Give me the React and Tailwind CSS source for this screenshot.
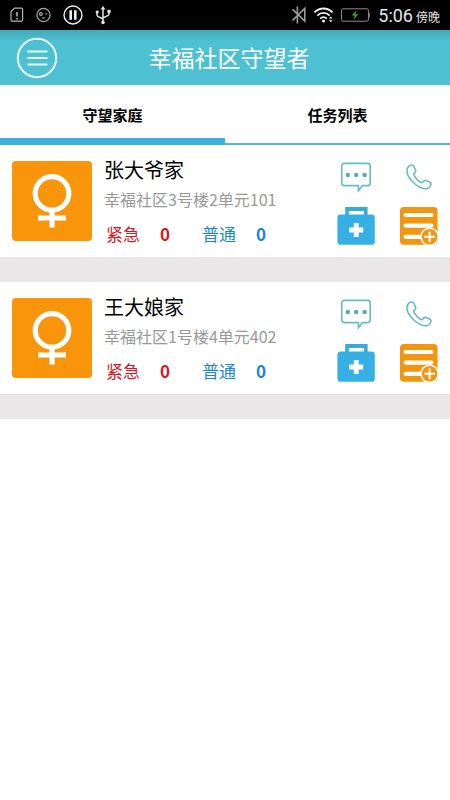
const families = [
    {
        name: "张大爷家",
        address: "幸福社区3号楼2单元101",
        urgent: 0,
        normal: 0,
    },
    {
        name: "王大娘家",
        address: "幸福社区1号楼4单元402",
        urgent: 0,
        normal: 0,
    },
]

const tabs = ["守望家庭", "任务列表"]

const SimIcon = () => (
    <svg width="14" height="16" viewBox="0 0 14 16" fill="none" stroke="#b4b4b4" strokeWidth="1.2">
        <path d="M4.6 1.2H11.4a1.2 1.2 0 0 1 1.2 1.2V13a1.2 1.2 0 0 1-1.2 1.2H2.2A1.2 1.2 0 0 1 1 13V4.8Z" />
        <path d="M7 5v4.6M7 11v1.4" strokeWidth="1.6" />
    </svg>
)

const FaceIcon = () => (
    <svg width="15" height="16" viewBox="0.5 0 15 16" fill="none" stroke="#a8a8a8" strokeWidth="1.2">
        <circle cx="8" cy="8" r="6.6" />
        <circle cx="5.4" cy="7" r="1.4" />
        <path d="M9.8 7h2M6.5 11h3" />
    </svg>
)

const PauseIcon = () => (
    <svg width="20" height="20" viewBox="0 0 20 20" fill="none" stroke="#f0f0f0">
        <circle cx="10" cy="10" r="9" strokeWidth="1.4" />
        <path d="M7.7 5.2v9.6M12.3 5.2v9.6" strokeWidth="2.6" />
    </svg>
)

const UsbIcon = () => (
    <svg width="16" height="20" viewBox="0 0 16 20" fill="none" stroke="#e4e4e4" strokeWidth="1.5">
        <path d="M8 3v14M2 7.5v2.2c0 1 .5 1.6 1.4 2L8 14M14 6.5v2.2c0 1-.5 1.6-1.4 2L8 13" />
        <path d="M8 0.8 10.3 4.4H5.7Z" fill="#e4e4e4" stroke="none" />
        <circle cx="8" cy="17.4" r="1.8" fill="#e4e4e4" stroke="none" />
        <circle cx="2.2" cy="7" r="1.6" fill="#e4e4e4" stroke="none" />
        <path d="M12.4 4.8h3.2V8h-3.2Z" fill="#e4e4e4" stroke="none" />
    </svg>
)

const BluetoothIcon = () => (
    <svg width="14" height="18" viewBox="0 0 14 18" fill="none" stroke="#9c9c9c" strokeWidth="1.6">
        <path d="M0.6 3.4 12.8 15.2V2.4L0.6 14.4M5.4 0.4v17.2" />
    </svg>
)

const WifiIcon = () => (
    <svg width="19" height="16" viewBox="0.5 0 19 16" fill="none" stroke="#f0f0f0" strokeWidth="1.8">
        <path d="M1 5.4C6 .2 14 .2 19 5.4M3.8 8.6c3.6-3.6 8.8-3.6 12.4 0M6.6 11.6c2-1.8 4.8-1.8 6.8 0" />
        <circle cx="10" cy="14" r="1.5" fill="#f0f0f0" stroke="none" />
        <path d="M17.2 9.6 19 11.6h-3.6ZM17.2 15.2 15.4 13.2H19Z" fill="#f0f0f0" stroke="none" />
    </svg>
)

const BatteryIcon = () => (
    <svg width="29" height="14" viewBox="0.5 0 29 14" fill="none">
        <rect x="1" y="0.8" width="27" height="12.4" rx="1.6" stroke="#8a8a8a" />
        <path d="M28.6 5v4" stroke="#8a8a8a" strokeWidth="1.4" />
        <path d="M15.6 2.4 11.4 7.6h2.8l-1 4 4.6-5.4h-3Z" fill="#3fae2a" />
    </svg>
)

const FemaleIcon = () => (
    <svg width="40" height="56" viewBox="0 0 40 56" fill="none" stroke="#fff">
        <circle cx="20" cy="20.4" r="16.8" strokeWidth="5.2" />
        <path d="M20 37v17.5M6 45h28" strokeWidth="5.2" />
    </svg>
)

const ChatIcon = () => (
    <svg width="32" height="32" viewBox="0 0 32 32" fill="none" stroke="#66bdc0" strokeWidth="1.6">
        <path d="M4.4 2.4H27.6a2.6 2.6 0 0 1 2.6 2.6V22a2.6 2.6 0 0 1-2.6 2.6H22.4L18.4 29.6V24.6H4.4A2.6 2.6 0 0 1 1.8 22V5A2.6 2.6 0 0 1 4.4 2.4Z" />
        <g fill="#55adb2" stroke="none">
            <circle cx="7.8" cy="14" r="2.2" />
            <circle cx="16.2" cy="14" r="2.2" />
            <circle cx="24.6" cy="14" r="2.2" />
        </g>
    </svg>
)

const PhoneIcon = () => (
    <svg width="28" height="28" viewBox="0 0 28 28" fill="none" stroke="#66bdc0" strokeWidth="1.6" strokeLinejoin="round">
        <path d="M7.2 2C5 1.6 2.4 4 2 6.6C1.6 9.6 3.4 14.4 7.6 18.8C11.6 23 16.4 25.6 20.4 25.8C23.4 25.8 25.6 23.6 26 21.2C26.2 20.2 25.8 19.6 25 19.2L20.8 17.6C19.8 17.2 19 17.6 18.4 18.4C17.6 19.6 16.6 20 15.4 19.2C12.8 17.6 10.4 15 9 12.4C8.4 11.2 8.8 10.4 9.8 9.8C10.8 9.2 11 8.4 10.6 7.4L8.8 3.2C8.4 2.4 8 2.1 7.2 2Z" />
    </svg>
)

const MedkitIcon = () => (
    <svg width="38" height="38" viewBox="0 0 38 38">
        <path d="M8.2 0H30.6V8H27V4H11.8V8H8.2Z" fill="#3aa9d6" />
        <rect x="0.4" y="7.4" width="37.4" height="30.4" rx="3.4" fill="#36b0e4" />
        <path d="M16.8 16h4.8v4.6h4.6v4.8h-4.6V30h-4.8v-4.6h-4.6v-4.8h4.6Z" fill="#fff" />
    </svg>
)

const TaskIcon = () => (
    <svg width="38" height="38" viewBox="0 0 38 38">
        <rect x="0" y="0" width="37.6" height="37.8" rx="4" fill="#f3960f" />
        <path d="M5.6 8h25.8M5.6 18.6h25.8M5.6 29.8h17" stroke="#fff" strokeWidth="4.2" strokeLinecap="round" />
        <circle cx="29.6" cy="29.8" r="9.4" fill="#fff" />
        <circle cx="29.6" cy="29.8" r="7.8" fill="#f3960f" />
        <path d="M29.6 24.4v10.8M24.2 29.8H35" stroke="#fff" strokeWidth="2" />
    </svg>
)

const actions = [
    { label: "消息", icon: ChatIcon },
    { label: "电话", icon: PhoneIcon },
    { label: "医疗", icon: MedkitIcon },
    { label: "添加任务", icon: TaskIcon },
]

const StatusBar = () => {
    return (
        <div className="flex h-[30px] items-center justify-between bg-black px-[10px]">
            <div className="flex items-center gap-3">
                <SimIcon />
                <FaceIcon />
                <PauseIcon />
                <UsbIcon />
            </div>
            <div className="flex items-center gap-2">
                <BluetoothIcon />
                <WifiIcon />
                <BatteryIcon />
                <div className="flex items-baseline gap-[3px] text-[#e6e6e6]">
                    <span className="font-[Roboto,sans-serif] text-[18px]">5:06</span>
                    <span className="text-[12px]">傍晚</span>
                </div>
            </div>
        </div>
    )
}

const Header = () => {
    return (
        <header className="grid h-[55px] grid-cols-[42px_1fr_34px] items-center bg-linear-to-b from-[#45a9b8] to-[#4dc0d1] to-20% px-4 text-white">
            <button aria-label="菜单">
                <svg width="42" height="42" viewBox="0 0 42 42" fill="none" stroke="#e9fbfd" strokeWidth="2">
                    <circle cx="21" cy="21" r="19.2" />
                    <path d="M11.4 14.4h20M11.4 21h20M11.4 27.4h20" />
                </svg>
            </button>
            <h1 className="text-center text-[23px]">幸福社区守望者</h1>
        </header>
    )
}

const Counter = ({ label, value, className }) => (
    <div className={className}>
        <span>{label}</span>
        <span className="font-bold">{value}</span>
    </div>
)

const FamilyRow = ({ family }) => {
    return (
        <li className="flex items-start border-b-[25px] border-[#e9e7e8] px-3 pb-[3px]">
            <div className="mt-4 flex h-20 w-20 shrink-0 items-center justify-center rounded bg-[#f9950b]">
                <FemaleIcon />
            </div>
            <div className="ml-3 min-w-0 flex-1 pt-[11px]">
                <h2 className="text-[20px] leading-[28px] text-black">{family.name}</h2>
                <p className="text-[16px] leading-[30px] text-[#999999]">{family.address}</p>
                <div className="flex gap-8 px-[2px] text-[17px] leading-[40px]">
                    <Counter label="紧急" value={family.urgent} className="flex gap-5 text-[#d81824]" />
                    <Counter label="普通" value={family.normal} className="flex gap-5 text-[#1c86cc]" />
                </div>
            </div>
            <div className="mt-[13px] grid shrink-0 grid-cols-2 gap-x-[25px] gap-y-[11px]">
                {actions.map((item) => (
                    <button key={item.label} aria-label={item.label} className="flex h-[38px] w-[38px] items-center justify-center">
                        <item.icon />
                    </button>
                ))}
            </div>
        </li>
    )
}

const App = () => {
    return (
        <div className="min-h-screen bg-white font-['Noto_Sans_CJK_SC',sans-serif]">
            <StatusBar />
            <Header />
            <nav className="grid h-[60px] grid-cols-2">
                {tabs.map((tab, idx) => (
                    <button
                        key={tab}
                        className={
                            idx === 0
                                ? "border-b-[7px] border-[#3db0e0] pt-[7px] text-[15px] font-bold text-black"
                                : "border-b-2 border-[#5cb4dc] pt-[2px] text-[15px] font-bold text-black"
                        }
                    >
                        {tab}
                    </button>
                ))}
            </nav>
            <ul>
                {families.map((family) => (
                    <FamilyRow key={family.name} family={family} />
                ))}
            </ul>
        </div>
    )
}

export default App
